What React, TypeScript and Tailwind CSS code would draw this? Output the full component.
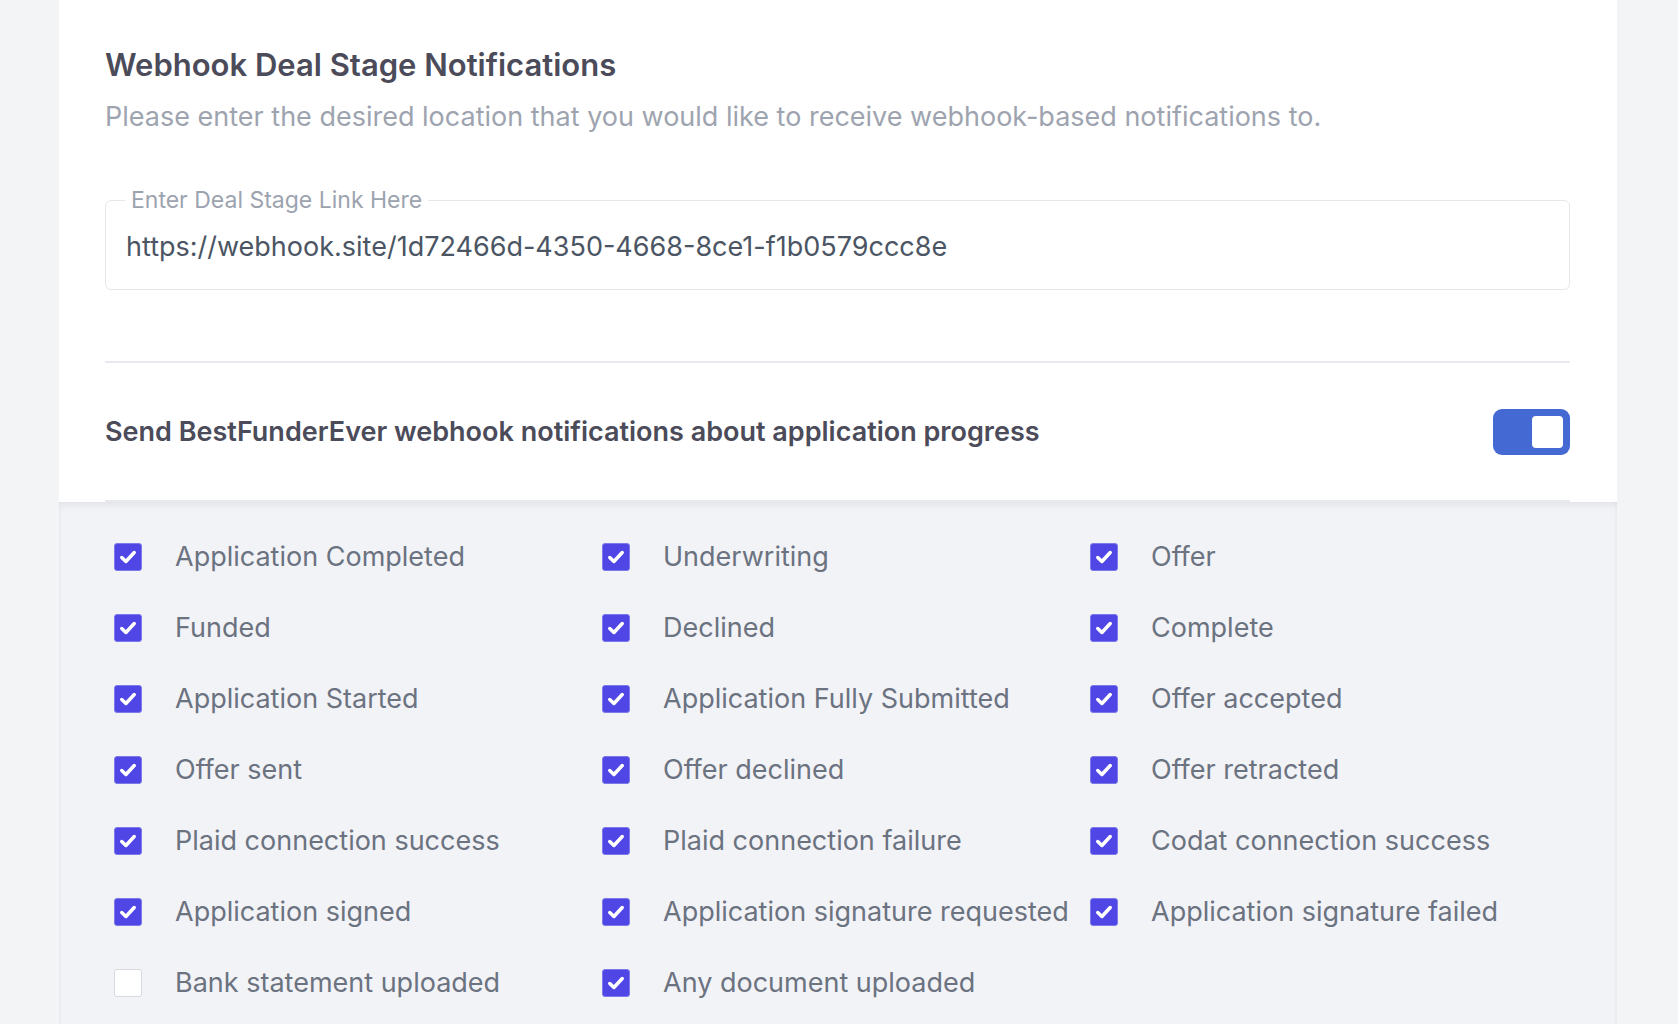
import { useState } from "react";

const events: { label: string; checked: boolean }[] = [
  { label: "Application Completed", checked: true },
  { label: "Underwriting", checked: true },
  { label: "Offer", checked: true },
  { label: "Funded", checked: true },
  { label: "Declined", checked: true },
  { label: "Complete", checked: true },
  { label: "Application Started", checked: true },
  { label: "Application Fully Submitted", checked: true },
  { label: "Offer accepted", checked: true },
  { label: "Offer sent", checked: true },
  { label: "Offer declined", checked: true },
  { label: "Offer retracted", checked: true },
  { label: "Plaid connection success", checked: true },
  { label: "Plaid connection failure", checked: true },
  { label: "Codat connection success", checked: true },
  { label: "Application signed", checked: true },
  { label: "Application signature requested", checked: true },
  { label: "Application signature failed", checked: true },
  { label: "Bank statement uploaded", checked: false },
  { label: "Any document uploaded", checked: true },
];

function Checkbox({ checked, onClick }: { checked: boolean; onClick: () => void }) {
  return (
    <button
      onClick={onClick}
      className={
        checked
          ? "w-[28px] h-[28px] rounded-[3px] bg-[#4f46e5] border border-[#7e79e8] flex items-center justify-center shrink-0"
          : "w-[28px] h-[28px] rounded-[3px] bg-white border border-[#d7dae0] flex items-center justify-center shrink-0"
      }
    >
      {checked && (
        <svg width="26" height="26" viewBox="0 0 25 25" fill="none">
          <path d="M6.5 13l4 3.8 8-8.6" stroke="white" strokeWidth="3.4" strokeLinecap="round" strokeLinejoin="round" />
        </svg>
      )}
    </button>
  );
}

export default function App() {
  const [items, setItems] = useState(events);
  const [enabled, setEnabled] = useState(true);

  const toggle = (i: number) =>
    setItems(items.map((it, idx) => (idx === i ? { ...it, checked: !it.checked } : it)));

  return (
    <div className="min-h-screen bg-[#f3f4f6] pl-[59px] pr-[61px] font-['Inter',sans-serif] flex flex-col">
      <div className="bg-white">
        <div className="pl-[46px] pr-[47px] pt-[45px]">
          <h2 className="text-[31px] leading-[40px] font-semibold text-[#4b4b5a]">
            Webhook Deal Stage Notifications
          </h2>
          <p className="mt-[14px] text-[27px] leading-[36px] text-[#9ea4af]">
            Please enter the desired location that you would like to receive webhook-based notifications to.
          </p>

          <fieldset className="mt-[53px] border border-[#e5e7eb] rounded-[6px] px-[20px] h-[102px]">
            <legend className="px-[6px] -ml-[1px] text-[23px] leading-[24px] text-[#9ca3af]">
              Enter Deal Stage Link Here
            </legend>
            <div className="mt-[17px] text-[27px] leading-[36px] text-[#4b5563]">
              https://webhook.site/1d72466d-4350-4668-8ce1-f1b0579ccc8e
            </div>
          </fieldset>

          <div className="mt-[71px] border-t-2 border-[#e8e9ee]" />

          <div className="flex items-center justify-between h-[137px]">
            <span className="text-[27px] leading-[36px] font-semibold text-[#4b4b5a]">
              Send BestFunderEver webhook notifications about application progress
            </span>
            <button
              onClick={() => setEnabled(!enabled)}
              className={
                enabled
                  ? "w-[77px] h-[46px] rounded-[9px] bg-[#4469d3] flex items-center justify-end pr-[7px]"
                  : "w-[77px] h-[46px] rounded-[9px] bg-[#d1d5db] flex items-center justify-start pl-[7px]"
              }
            >
              <span className="w-[31px] h-[32px] rounded-[4px] bg-white block" />
            </button>
          </div>
          <div className="border-t-2 border-[#e8e9ee]" />
        </div>
      </div>

      <div className="flex-1 bg-[#f2f3f7] shadow-[inset_0_6px_8px_-4px_rgba(0,0,0,0.08),inset_2px_0_4px_-2px_rgba(0,0,0,0.05),inset_-2px_0_4px_-2px_rgba(0,0,0,0.05)] pl-[55px] pt-[19px] pb-[8px]">
        <div className="grid grid-cols-[488px_488px_1fr]">
          {items.map((it, i) => (
            <div key={it.label} className="h-[71px] flex items-center gap-[33px]">
              <Checkbox checked={it.checked} onClick={() => toggle(i)} />
              <span className="text-[27px] leading-[36px] text-[#6b7280] whitespace-nowrap">{it.label}</span>
            </div>
          ))}
        </div>
      </div>
    </div>
  );
}
